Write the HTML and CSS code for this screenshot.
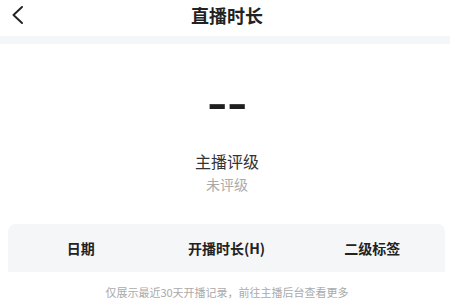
FILE: index.html
```html
<!DOCTYPE html>
<html lang="zh">
<head>
<meta charset="utf-8">
<link rel="stylesheet" href="styles.css">
</head>
<body>
<div class="page">
  <header class="nav">
    <div class="nav-left">
      <svg class="back" width="12" height="18" viewBox="0 0 12 18"><polyline points="10,1 1.5,9 10,17" fill="none" stroke="#222" stroke-width="1.9" stroke-linecap="round" stroke-linejoin="round"/></svg>
    </div>
    <h1 class="title">直播时长</h1>
    <div class="nav-right"></div>
  </header>
  <div class="band"></div>
  <main class="summary">
    <div class="value"><span class="dashes">--</span></div>
    <div class="grade-title">主播评级</div>
    <div class="grade-value">未评级</div>
  </main>
  <div class="table-head">
    <div class="col">日期</div>
    <div class="col">开播时长(H)</div>
    <div class="col">二级标签</div>
  </div>
  <p class="note">仅展示最近30天开播记录，前往主播后台查看更多</p>
</div>
</body>
</html>
```
FILE: styles.css
```css
html, body {
  margin: 0;
  padding: 0;
  background: #ffffff;
}
body {
  width: 450px;
  height: 306px;
  overflow: hidden;
  font-family: "Noto Sans CJK SC", "Liberation Sans", sans-serif;
}
.page {
  display: flex;
  flex-direction: column;
}
.nav {
  height: 36px;
  display: grid;
  grid-template-columns: 1fr auto 1fr;
  align-items: start;
  padding-left: 4px;
  box-sizing: border-box;
}
.nav-left {
  display: flex;
  align-items: flex-start;
}
.back {
  display: block;
  margin-left: 8px;
  margin-top: 6px;
}
.title {
  margin: 0;
  font-size: 18px;
  line-height: 30px;
  font-weight: 700;
  color: #222222;
}
.band {
  height: 8px;
  background: #f5f6f8;
}
.summary {
  display: flex;
  flex-direction: column;
  align-items: center;
  padding-left: 4px;
}
.value {
  margin-top: 39px;
  height: 40px;
  font-family: "Liberation Sans", sans-serif;
  font-size: 40px;
  line-height: 40px;
  font-weight: 700;
  color: #1f1f1f;
}
.dashes {
  display: inline-block;
  transform: scaleX(1.5);
}
.grade-title {
  margin-top: 26px;
  font-size: 16px;
  line-height: 24px;
  color: #333333;
}
.grade-value {
  font-size: 14px;
  line-height: 22px;
  color: #aaaaaa;
}
.table-head {
  margin: 29px 5px 0 8px;
  height: 48px;
  background: #f5f6f8;
  border-radius: 8px 8px 0 0;
  display: grid;
  grid-template-columns: 1fr 1fr 1fr;
  align-items: center;
}
.col {
  text-align: center;
  font-size: 14px;
  font-weight: 700;
  color: #222222;
  line-height: 20px;
}
.note {
  margin: 12px 0 0 4px;
  text-align: center;
  font-size: 11px;
  line-height: 16px;
  color: #aaaaaa;
}
```
